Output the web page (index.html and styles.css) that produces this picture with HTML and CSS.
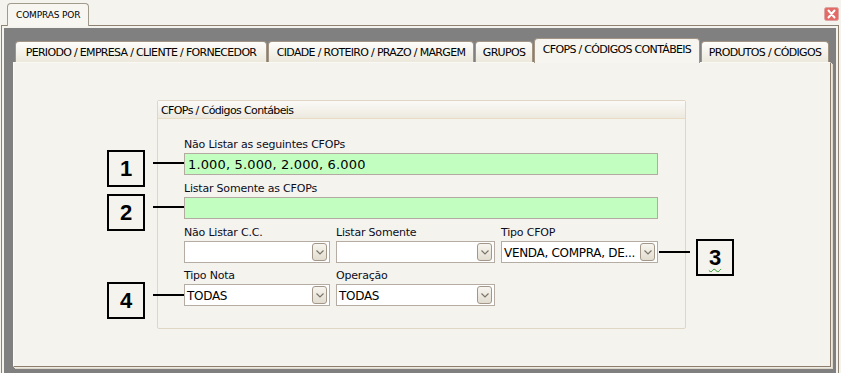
FILE: index.html
```html
<!DOCTYPE html>
<html>
<head>
<meta charset="utf-8">
<link rel="stylesheet" href="styles.css">
</head>
<body>
<div class="app">
  <div class="outer-tabs">
    <div class="outer-tab">COMPRAS POR</div>
    <div class="close-btn"><svg width="15" height="14" viewBox="0 0 15 14"><rect x="0.5" y="0.5" width="14" height="13" rx="2" fill="#e46a66" stroke="#dca4a2"/><path d="M4.5 3.5 L10.5 10.5 M10.5 3.5 L4.5 10.5" stroke="#fff" stroke-width="2" stroke-linecap="round"/></svg></div>
  </div>
  <div class="outer-panel">
    <div class="gray">
      <div class="tabs">
        <div class="tab t1">PERIODO / EMPRESA / CLIENTE / FORNECEDOR</div>
        <div class="tab t2">CIDADE / ROTEIRO / PRAZO / MARGEM</div>
        <div class="tab t3">GRUPOS</div>
        <div class="tab t4 active">CFOPS / CÓDIGOS CONTÁBEIS</div>
        <div class="tab t5">PRODUTOS / CÓDIGOS</div>
      </div>
      <div class="panel">
        <div class="group">
          <div class="group-head">CFOPs / Códigos Contábeis</div>
          <div class="group-body">
            <div class="field">
              <div class="label">Não Listar as seguintes CFOPs</div>
              <div class="input green">1.000, 5.000, 2.000, 6.000</div>
            </div>
            <div class="field">
              <div class="label">Listar Somente as CFOPs</div>
              <div class="input green"></div>
            </div>
            <div class="grid">
              <div class="field">
                <div class="label">Não Listar C.C.</div>
                <div class="combo"><span class="val"></span><span class="btn"><svg width="8" height="5" viewBox="0 0 8 5"><path d="M0.5 0.5 L4 4 L7.5 0.5" fill="none" stroke="#7b7468" stroke-width="1.2"/></svg></span></div>
              </div>
              <div class="field">
                <div class="label">Listar Somente</div>
                <div class="combo"><span class="val"></span><span class="btn"><svg width="8" height="5" viewBox="0 0 8 5"><path d="M0.5 0.5 L4 4 L7.5 0.5" fill="none" stroke="#7b7468" stroke-width="1.2"/></svg></span></div>
              </div>
              <div class="field">
                <div class="label">Tipo CFOP</div>
                <div class="combo"><span class="val">VENDA, COMPRA, DE...</span><span class="btn"><svg width="8" height="5" viewBox="0 0 8 5"><path d="M0.5 0.5 L4 4 L7.5 0.5" fill="none" stroke="#7b7468" stroke-width="1.2"/></svg></span></div>
              </div>
              <div class="field">
                <div class="label">Tipo Nota</div>
                <div class="combo"><span class="val">TODAS</span><span class="btn"><svg width="8" height="5" viewBox="0 0 8 5"><path d="M0.5 0.5 L4 4 L7.5 0.5" fill="none" stroke="#7b7468" stroke-width="1.2"/></svg></span></div>
              </div>
              <div class="field">
                <div class="label">Operação</div>
                <div class="combo"><span class="val">TODAS</span><span class="btn"><svg width="8" height="5" viewBox="0 0 8 5"><path d="M0.5 0.5 L4 4 L7.5 0.5" fill="none" stroke="#7b7468" stroke-width="1.2"/></svg></span></div>
              </div>
            </div>
          </div>
        </div>
        <div class="callout c1">1</div>
        <div class="line l1"></div>
        <div class="callout c2">2</div>
        <div class="line l2"></div>
        <div class="callout c3"><span class="spell">3</span></div>
        <div class="line l3"></div>
        <div class="callout c4">4</div>
        <div class="line l4"></div>
      </div>
    </div>
  </div>
</div>
</body>
</html>
```
FILE: styles.css
```css
* { box-sizing: border-box; }
html, body { margin: 0; padding: 0; }
body {
  background: #f4f3ee;
  font-family: "DejaVu Sans", Verdana, sans-serif;
  font-size: 11px;
  color: #000;
  width: 841px;
  height: 373px;
  overflow: hidden;
}
.app { width: 841px; height: 373px; }

.outer-tabs {
  height: 25px;
  padding: 3px 2px 0 7px;
  display: flex;
  justify-content: space-between;
  align-items: flex-start;
}
.outer-tab {
  width: 82px;
  height: 23px;
  border: 1px solid #a19b8e;
  border-bottom: none;
  border-radius: 4px 4px 0 0;
  background: #f7f6f1;
  font-size: 9px;
  letter-spacing: -0.15px;
  padding: 6px 0 0 8px;
  position: relative;
  z-index: 2;
}
.close-btn { margin-top: 4px; width: 15px; height: 14px; }
.close-btn svg { display: block; }

.outer-panel {
  margin-left: 1px;
  width: 838px;
  height: 348px;
  border: 1px solid #8e8272;
  border-bottom: none;
  padding: 2px 2px 0 2px;
  background: #f4f3ee;
}
.gray {
  background: #808080;
  height: 100%;
  padding: 10px 0 0 9px;
}

.tabs {
  display: flex;
  align-items: flex-end;
  height: 24px;
  padding-left: 2px;
  position: relative;
  z-index: 2;
}
.tab {
  height: 21px;
  border: 1px solid #a39585;
  border-bottom: none;
  border-radius: 4px 4px 0 0;
  background: linear-gradient(#fdfdfb, #ece8dc);
  white-space: nowrap;
  letter-spacing: -0.68px;
  padding: 4px 0 0 0;
  text-align: center;
  margin-right: 1px;
}
.t1 { width: 252px; }
.t2 { width: 206px; }
.t3 { width: 58px; }
.t4 { width: 166px; }
.t5 { width: 128px; }
.tab.active {
  height: 25px;
  margin-bottom: -1px;
  background: #f6f5f0;
  padding-top: 4px;
}

.panel {
  position: relative;
  width: 818px;
  height: 305px;
  background: #f4f3ee;
  border: 1px solid #8b7e6e;
  border-top-color: #faf9f5;
  border-left-color: #fbfaf7;
  box-shadow: 1px 1px 0 #ede9e0, 2px 2px 0 #ddd7cb;
  padding: 37px 0 0 143px;
}

.group {
  width: 529px;
  height: 229px;
  border: 1px solid #dfd6c6;
  border-radius: 2px;
}
.group-head {
  height: 18px;
  background: linear-gradient(#fbfaf7, #ede9df);
  border-bottom: 1px solid #e8dcc4;
  padding: 3px 0 0 3px;
  letter-spacing: -0.62px;
}
.group-body {
  padding: 18px 0 0 26px;
  width: 500px;
}
.field { display: flex; flex-direction: column; }
.label {
  height: 14px;
  margin-bottom: 2px;
  line-height: 14px;
  padding-top: 1px;
  letter-spacing: -0.2px;
  color: #0c0c1c;
}
.input {
  height: 22px;
  width: 474px;
  border: 1px solid #b3aaa1;
  background: #c3fec1;
  font-size: 13px;
  padding: 3px 0 0 3px;
  letter-spacing: 0.15px;
  margin-bottom: 6px;
}
.grid {
  display: grid;
  grid-template-columns: 146px 159px 157px;
  column-gap: 6px;
  row-gap: 5px;
  width: 474px;
}
.combo {
  height: 22px;
  border: 1px solid #b5ada3;
  background: #fff;
  display: flex;
  justify-content: space-between;
  align-items: center;
  padding: 0 2px 0 2px;
}
.combo .val {
  font-size: 12px;
  letter-spacing: -0.3px;
  white-space: nowrap;
  padding-top: 2px;
}
.combo .btn {
  width: 15px;
  height: 18px;
  border: 1px solid #a3978a;
  border-radius: 3px;
  background: linear-gradient(#f7f5ef, #e2ddd0);
  display: flex;
  align-items: center;
  justify-content: center;
}
.combo .btn svg { display: block; }

.callout {
  position: absolute;
  width: 38px;
  height: 37px;
  border: 2px solid #000;
  background: #f4f3ee;
  font-family: "Liberation Sans", Arial, sans-serif;
  font-weight: bold;
  font-size: 22px;
  display: flex;
  align-items: center;
  justify-content: center;
}
.c1 { left: 93px; top: 87px; }
.c2 { left: 93px; top: 131px; }
.c3 { left: 682px; top: 176px; }
.c4 { left: 93px; top: 219px; }
.line {
  position: absolute;
  height: 2px;
  background: #000;
}
.l1 { left: 139px; top: 99px; width: 31px; }
.l2 { left: 139px; top: 143px; width: 31px; }
.l3 { left: 645px; top: 188px; width: 31px; }
.l4 { left: 139px; top: 231px; width: 31px; }
.spell {
  text-decoration: underline wavy #2a9a2a;
  text-decoration-thickness: 1px;
  text-underline-offset: 3px;
}
```
